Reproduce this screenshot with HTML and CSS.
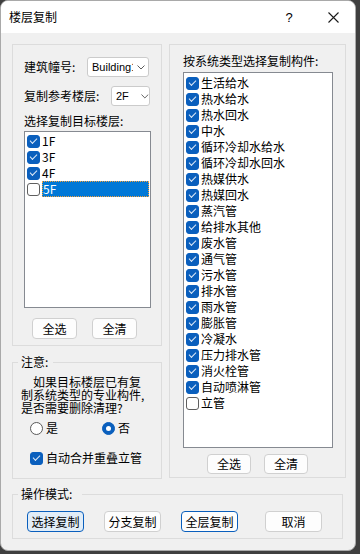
FILE: index.html
```html
<!DOCTYPE html>
<html lang="zh-CN">
<head>
  <meta charset="UTF-8">
  <title>楼层复制</title>
  <link rel="stylesheet" href="styles.css">
</head>
<body>
  <div class="dialog">
    <div class="titlebar">
      <span class="title">楼层复制</span>
      <span class="help">?</span>
      <span class="close">
        <svg width="11" height="11" viewBox="0 0 11 11"><path d="M0.5 0.5L10.5 10.5M10.5 0.5L0.5 10.5" stroke="#1a1a1a" stroke-width="1.1" fill="none"/></svg>
      </span>
    </div>

    <div class="main">
      <div class="left-col">
        <!-- 楼层选择 -->
        <div class="group floors">
          <div class="row">
            <span class="lbl lbl-building">建筑幢号:</span>
            <div class="combo combo-building">
              <span class="val">Building1</span>
              <svg class="chev" width="8" height="5" viewBox="0 0 8 5"><path d="M0.5 0.5L4 4L7.5 0.5" stroke="#5c5c5c" fill="none"/></svg>
            </div>
          </div>
          <div class="row row2">
            <span class="lbl lbl-ref">复制参考楼层:</span>
            <div class="combo combo-ref">
              <span class="val">2F</span>
              <svg class="chev" width="8" height="5" viewBox="0 0 8 5"><path d="M0.5 0.5L4 4L7.5 0.5" stroke="#5c5c5c" fill="none"/></svg>
            </div>
          </div>
          <div class="caption">选择复制目标楼层:</div>
          <div class="listbox floor-list">
            <div class="item"><span class="cb on"></span><span class="txt">1F</span></div>
            <div class="item"><span class="cb on"></span><span class="txt">3F</span></div>
            <div class="item"><span class="cb on"></span><span class="txt">4F</span></div>
            <div class="item"><span class="cb"></span><span class="txt selected">5F</span></div>
          </div>
          <div class="btn-row floor-btns">
            <div class="btn small">全选</div>
            <div class="btn small">全清</div>
          </div>
        </div>

        <!-- 注意 -->
        <fieldset class="notice">
          <legend>注意:</legend>
          <p class="note-text">如果目标楼层已有复制系统类型的专业构件,是否需要删除清理?</p>
          <div class="radios">
            <span class="radio-item r-yes"><span class="radio"></span>是</span>
            <span class="radio-item r-no"><span class="radio on"></span>否</span>
          </div>
          <div class="merge"><span class="cb on"></span><span class="txt">自动合并重叠立管</span></div>
        </fieldset>
      </div>

      <!-- 系统类型 -->
      <div class="group systems">
        <div class="caption">按系统类型选择复制构件:</div>
        <div class="listbox sys-list">
          <div class="item"><span class="cb on"></span><span class="txt">生活给水</span></div>
          <div class="item"><span class="cb on"></span><span class="txt">热水给水</span></div>
          <div class="item"><span class="cb on"></span><span class="txt">热水回水</span></div>
          <div class="item"><span class="cb on"></span><span class="txt">中水</span></div>
          <div class="item"><span class="cb on"></span><span class="txt">循环冷却水给水</span></div>
          <div class="item"><span class="cb on"></span><span class="txt">循环冷却水回水</span></div>
          <div class="item"><span class="cb on"></span><span class="txt">热媒供水</span></div>
          <div class="item"><span class="cb on"></span><span class="txt">热媒回水</span></div>
          <div class="item"><span class="cb on"></span><span class="txt">蒸汽管</span></div>
          <div class="item"><span class="cb on"></span><span class="txt">给排水其他</span></div>
          <div class="item"><span class="cb on"></span><span class="txt">废水管</span></div>
          <div class="item"><span class="cb on"></span><span class="txt">通气管</span></div>
          <div class="item"><span class="cb on"></span><span class="txt">污水管</span></div>
          <div class="item"><span class="cb on"></span><span class="txt">排水管</span></div>
          <div class="item"><span class="cb on"></span><span class="txt">雨水管</span></div>
          <div class="item"><span class="cb on"></span><span class="txt">膨胀管</span></div>
          <div class="item"><span class="cb on"></span><span class="txt">冷凝水</span></div>
          <div class="item"><span class="cb on"></span><span class="txt">压力排水管</span></div>
          <div class="item"><span class="cb on"></span><span class="txt">消火栓管</span></div>
          <div class="item"><span class="cb on"></span><span class="txt">自动喷淋管</span></div>
          <div class="item"><span class="cb"></span><span class="txt">立管</span></div>
        </div>
        <div class="btn-row sys-btns">
          <div class="btn small">全选</div>
          <div class="btn small">全清</div>
        </div>
      </div>
    </div>

    <!-- 操作模式 -->
    <fieldset class="mode">
      <legend>操作模式:</legend>
      <div class="btn-row mode-btns">
        <div class="btn wide default">选择复制</div>
        <div class="btn wide">分支复制</div>
        <div class="btn wide focus">全层复制</div>
        <div class="btn wide cancel">取消</div>
      </div>
    </fieldset>
  </div>
</body>
</html>
```

FILE: styles.css
```css
* {
  box-sizing: border-box;
}

body {
  margin: 0;
  background: #3f3f3f;
  font-family: "Noto Sans CJK SC", "Noto Sans", sans-serif;
  font-size: 12px;
  color: #000;
}

.dialog {
  width: 356px;
  height: 551px;
  background: #f0f0f0;
  border: 1px solid #a9a9a9;
  border-radius: 8px;
  overflow: hidden;
}

.titlebar {
  height: 32px;
  background: #fff;
  display: flex;
  align-items: center;
}

.title {
  padding-left: 8px;
  line-height: 16px;
}

.help {
  margin-left: auto;
  width: 12px;
  text-align: center;
  font-family: "Liberation Sans", sans-serif;
  font-size: 13px;
}

.close {
  display: flex;
  margin-left: 33px;
  margin-right: 16px;
}

.main {
  display: flex;
  gap: 7px;
  padding: 11px 0 0 11px;
}

.left-col {
  width: 150px;
  display: flex;
  flex-direction: column;
  gap: 9px;
}

.group {
  border: 1px solid #dcdcdc;
}

.floors {
  height: 302px;
  padding: 12px 0 0 11px;
}

.row {
  display: flex;
  align-items: center;
  height: 20px;
}

.row2 {
  margin-top: 9px;
}

.lbl {
  line-height: 16px;
}

.lbl-building {
  width: 63px;
}

.lbl-ref {
  width: 87px;
}

.combo {
  height: 20px;
  background: #fff;
  border: 1px solid #cbcbcb;
  border-radius: 3px;
  display: flex;
  align-items: center;
  padding-left: 4px;
}

.combo .val {
  font-family: "Liberation Sans", sans-serif;
  font-size: 11px;
  overflow: hidden;
  white-space: nowrap;
}

.combo-building {
  width: 62px;
}

.combo-building .val {
  width: 41px;
}

.combo-ref {
  width: 39px;
}

.combo-ref .val {
  width: 22px;
}

.chev {
  margin-left: 4px;
}

.caption {
  line-height: 16px;
  margin-top: 7px;
}

.listbox {
  background: #fff;
  border: 1px solid #868a91;
  padding: 1px 0;
}

.floor-list {
  margin-top: 2px;
  width: 127px;
  height: 177px;
}

.item {
  display: flex;
  align-items: center;
  height: 16px;
  padding-left: 2px;
}

.txt {
  margin-left: 2px;
  line-height: 16px;
  white-space: nowrap;
}

.txt.selected {
  flex: 1;
  margin-right: 1px;
  padding-left: 1px;
  background: #0078d7;
  color: #fff;
  outline: 1px dotted #f3a03c;
  outline-offset: -1px;
}

.cb {
  position: relative;
  width: 13px;
  height: 13px;
  flex: none;
  background: #fff;
  border: 1px solid #5f5f5f;
  border-radius: 3px;
}

.cb.on {
  background: #0a5fbd;
  border-color: #0a5fbd;
}

.cb.on::after {
  content: "";
  position: absolute;
  left: 2px;
  top: 2px;
  width: 6px;
  height: 3px;
  border-left: 1.2px solid #dfeaf7;
  border-bottom: 1.2px solid #dfeaf7;
  transform: rotate(-45deg);
}

.btn-row {
  display: flex;
}

.btn {
  display: flex;
  align-items: center;
  justify-content: center;
  background: #fdfdfd;
  border: 1px solid #d0d0d0;
  border-radius: 4px;
  line-height: 16px;
}

.small {
  width: 45px;
  height: 21px;
}

.floor-btns {
  margin-top: 10px;
  padding-left: 8px;
  gap: 15px;
}

fieldset {
  margin: 0;
  min-width: 0;
  border: 1px solid #dcdcdc;
}

legend {
  line-height: 14px;
  padding: 0 5px 0 3px;
  margin-left: -3px;
}

.notice {
  height: 124px;
  padding: 6px 0 0 8px;
}

.note-text {
  margin: 0;
  width: 126px;
  line-height: 13px;
  text-indent: 12px;
}

.radios {
  display: flex;
  align-items: center;
  height: 16px;
  margin-top: 6px;
}

.radio-item {
  display: flex;
  align-items: center;
  gap: 3px;
  line-height: 16px;
}

.r-yes {
  margin-left: 9px;
}

.r-no {
  margin-left: 44px;
}

.radio {
  position: relative;
  width: 13px;
  height: 13px;
  border: 1px solid #5a5a5a;
  border-radius: 50%;
  background: #fff;
}

.radio.on {
  background: #0a5fbd;
  border-color: #0a5fbd;
}

.radio.on::after {
  content: "";
  position: absolute;
  left: 3px;
  top: 3px;
  width: 5px;
  height: 5px;
  border-radius: 50%;
  background: #fff;
}

.merge {
  display: flex;
  align-items: center;
  height: 16px;
  margin-top: 14px;
  padding-left: 9px;
}

.merge .txt {
  margin-left: 3px;
}

.systems {
  width: 177px;
  height: 434px;
  padding: 8px 0 0 13px;
}

.systems .caption {
  margin-top: 0;
}

.sys-list {
  margin-top: 3px;
  width: 150px;
  height: 376px;
  padding-top: 2px;
}

.sys-btns {
  margin-top: 6px;
  padding-left: 24px;
  gap: 13px;
}

.sys-btns .small {
  width: 44px;
  height: 20px;
}

.mode {
  width: 331px;
  margin: 8px 0 0 11px;
  padding: 10px 0 6px 14px;
}

.mode legend {
  margin-left: -9px;
  padding-right: 10px;
}

.mode-btns {
  gap: 20px;
}

.wide {
  width: 57px;
  height: 21px;
}

.default {
  background: #e1edf8;
  border-color: #0a5fbd;
}

.focus {
  border-color: #0a5fbd;
}

.cancel {
  margin-left: 7px;
}
```
